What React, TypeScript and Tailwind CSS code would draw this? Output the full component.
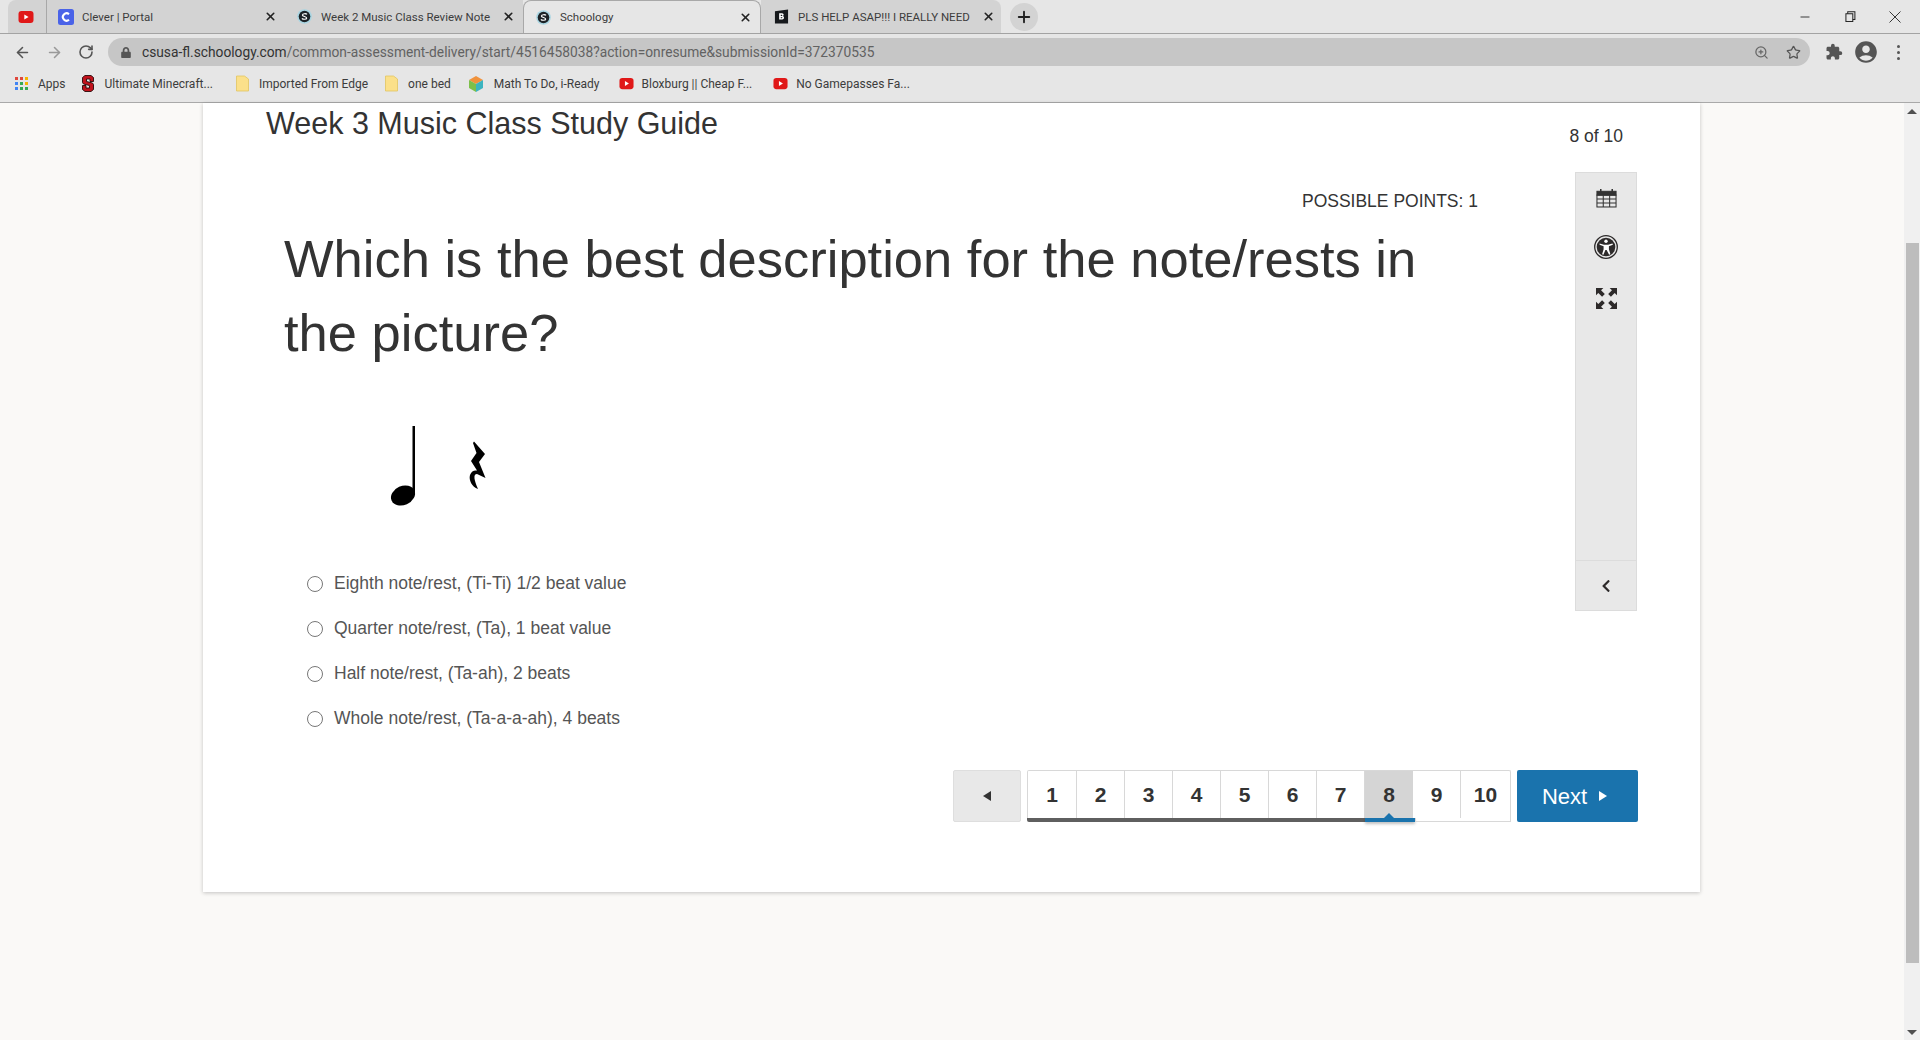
import { ArrowLeft, ArrowRight, RotateCw, ZoomIn, Star, Plus, X, Minus } from "lucide-react";
import { FaChevronLeft, FaLock } from "react-icons/fa";
import { MdAccountCircle, MdExtension } from "react-icons/md";

const chromeFont = "font-['Roboto',sans-serif]";

const YouTubeIcon = ({ className }: { className: string }) => (
  <svg viewBox="0 0 16 16" className={className}>
    <rect x="0.5" y="2" width="15" height="12" rx="3" fill="#e01818" />
    <path d="M6.3 5.4 10.6 8l-4.3 2.6z" fill="#fff" />
  </svg>
);

const SchoologyIcon = () => (
  <svg viewBox="0 0 16 16" className="w-[15px] h-[15px] shrink-0">
    <circle cx="8" cy="8" r="7.8" fill="#a9d5e2" />
    <circle cx="8" cy="8" r="6.2" fill="#1c2226" />
    <path d="M10.6 5.8C10 4.8 6 4.6 5.8 6.4 5.6 8.2 10.4 7.8 10.3 9.7 10.2 11.4 6 11.2 5.3 10" fill="none" stroke="#fff" strokeWidth="1.3" />
  </svg>
);

const CleverIcon = () => (
  <svg viewBox="0 0 16 16" className="w-4 h-4 shrink-0">
    <rect width="16" height="16" rx="2.5" fill="#4a63e8" />
    <path d="M11 5.2A3.7 3.7 0 1 0 11 10.8" fill="none" stroke="#fff" strokeWidth="2" />
  </svg>
);

const BrainlyIcon = () => (
  <svg viewBox="0 0 16 16" className="w-[15px] h-[15px] shrink-0">
    <path d="M1 2.5 15 0.5V15.5H1z" fill="#16191c" />
    <path d="M5.5 4.5h3.2c2 0 2.2 2.6.6 3 2 .3 1.8 3.6-.4 3.6H5.5zM7.2 6v1.5h1c.9 0 .9-1.5 0-1.5zM7.2 8.8v1h1.2c.9 0 .9-1 0-1z" fill="#fff" fillRule="evenodd" />
  </svg>
);

const FolderIcon = () => (
  <svg viewBox="0 0 13 17" className="w-[13px] h-[17px] shrink-0">
    <path d="M.5 1h8l4 3v12H.5z" fill="#fbe08a" stroke="#e2c560" strokeWidth="0.8" />
  </svg>
);

const AppsIcon = () => {
  const dots = ["#e0483c", "#e0483c", "#f4b400", "#4285f4", "#34a853", "#f4b400", "#4285f4", "#34a853", "#34a853"];
  return (
    <div className="grid grid-cols-3 gap-[2px] w-[13px] shrink-0">
      {dots.map((c, i) => (
        <span key={i} className="w-[3px] h-[3px]" style={{ background: c }} />
      ))}
    </div>
  );
};

const tabs = [
  { id: "clever", title: "Clever | Portal", icon: <CleverIcon />, active: false, gap: "gap-[8px]", pad: "pl-[11px]" },
  { id: "notes", title: "Week 2 Music Class Review Note", icon: <SchoologyIcon />, active: false, gap: "gap-[9px]", pad: "pl-[12px]" },
  { id: "school", title: "Schoology", icon: <SchoologyIcon />, active: true, gap: "gap-[9px]", pad: "pl-[12px]" },
  { id: "brainly", title: "PLS HELP ASAP!!! I REALLY NEED", icon: <BrainlyIcon />, active: false, gap: "gap-[9px]", pad: "pl-[13px]" },
];

const Tab = ({ title, icon, active, gap, pad, last }: { title: string; icon: React.ReactNode; active: boolean; gap: string; pad: string; last: boolean }) => (
  <div
    className={`w-[238px] h-full flex items-center ${last ? "pr-[6px]" : "pr-[8px]"} ${pad} ${gap} ${
      active ? "bg-[#e6e6e6] rounded-t-[8px] border border-b-0 border-[#a8a8a8] -mb-px h-[34px] z-10" : `bg-[#d3d3d3] ${last ? "rounded-tr-[8px] w-[240px]" : ""}`
    }`}
  >
    {icon}
    <span className="flex-1 min-w-0 pt-[2px] text-[11.5px] text-[#3c3c3c] whitespace-nowrap overflow-hidden">{title}</span>
    <X className="w-[13px] h-[13px] text-[#222] shrink-0" strokeWidth={3} />
  </div>
);

const Bookmark = ({ icon, label, className }: { icon: React.ReactNode; label: string; className: string }) => (
  <div className={`flex items-center ${className}`}>
    {icon}
    <span className="text-[12px] text-[#3c3c3c] whitespace-nowrap">{label}</span>
  </div>
);

const BrowserChrome = () => (
  <div className={`shrink-0 ${chromeFont}`}>
    <div className="h-[34px] bg-[#e6e6e6] border-b border-[#a3a3a3] flex items-stretch pl-[8px] pr-[19px]">
      <div className="w-[39px] bg-[#d3d3d3] rounded-tl-[8px] flex items-center justify-center border-r border-[#a8a8a8] pr-[2px]">
        <YouTubeIcon className="w-4 h-4" />
      </div>
      {tabs.map((t, i) => (
        <Tab key={t.id} title={t.title} icon={t.icon} active={t.active} gap={t.gap} pad={t.pad} last={i === 3} />
      ))}
      <div className="ml-[9px] my-auto w-[28px] h-[28px] rounded-full bg-[#d3d3d3] flex items-center justify-center">
        <Plus className="w-[18px] h-[18px] text-[#222]" strokeWidth={2.5} />
      </div>
      <div className="ml-auto flex items-center gap-[33px] text-[#222]">
        <Minus className="w-[14px] h-[14px]" strokeWidth={1.5} />
        <svg viewBox="0 0 12 12" className="w-[11px] h-[11px]" fill="none" stroke="currentColor" strokeWidth="1.1">
          <rect x="1" y="3" width="7.5" height="8.5" />
          <path d="M3 3V.8h7.8v8.4H8.5" />
        </svg>
        <svg viewBox="0 0 12 12" className="w-[12px] h-[12px]" fill="none" stroke="currentColor" strokeWidth="0.9">
          <path d="M.5.5l11 11M11.5.5l-11 11" />
        </svg>
      </div>
    </div>
    <div className="h-[36px] bg-[#e6e6e6] flex items-center pl-[14px]">
      <ArrowLeft className="w-[17px] h-[17px] text-[#555]" strokeWidth={2.2} />
      <ArrowRight className="w-[17px] h-[17px] text-[#999] ml-[15px]" strokeWidth={2.2} />
      <RotateCw className="w-[16px] h-[16px] text-[#555] ml-[15px]" strokeWidth={2.4} />
      <div className="ml-[14px] w-[1702px] h-[28px] bg-[#c6c6c6] rounded-full flex items-center pl-[13px] pr-[9px] shrink-0">
        <FaLock className="w-[10px] h-[11px] text-[#555]" />
        <span className="ml-[11px] text-[13.75px] text-[#333] whitespace-nowrap">
          csusa-fl.schoology.com
          <span className="text-[#626262]">/common-assessment-delivery/start/4516458038?action=onresume&amp;submissionId=372370535</span>
        </span>
        <ZoomIn className="ml-auto w-[15px] h-[15px] text-[#666]" />
        <Star className="ml-[17px] w-[15px] h-[15px] text-[#555]" strokeWidth={2} />
      </div>
      <MdExtension className="ml-[15px] w-[18px] h-[18px] text-[#555] shrink-0" />
      <MdAccountCircle className="ml-[10px] w-[26px] h-[26px] text-[#555] shrink-0" />
      <div className="ml-[18px] flex flex-col gap-[3px] shrink-0">
        <span className="w-[3px] h-[3px] rounded-full bg-[#555]" />
        <span className="w-[3px] h-[3px] rounded-full bg-[#555]" />
        <span className="w-[3px] h-[3px] rounded-full bg-[#555]" />
      </div>
    </div>
    <div className="h-[33px] bg-[#e6e6e6] border-b border-[#a9a9a9] flex items-center pl-[15px] pb-[5px]">
      <Bookmark icon={<AppsIcon />} label="Apps" className="gap-[10px]" />
      <Bookmark
        icon={
          <svg viewBox="0 0 12 17" className="w-[12px] h-[17px] shrink-0">
            <path
              d="M3 .5h6l2.500 2v4H8V4H4.500v2.500L10.500 8l1 1.500v5L9 16.500H3l-2.500-2v-4H4V13h3.500v-2.500L1.500 9 .5 7.500v-5z"
              fill="#c1121c"
              stroke="#2a0a0a"
              strokeWidth="0.9"
            />
          </svg>
        }
        label="Ultimate Minecraft..."
        className="ml-[16px] gap-[11px]"
      />
      <Bookmark icon={<FolderIcon />} label="Imported From Edge" className="ml-[23px] gap-[10px]" />
      <Bookmark icon={<FolderIcon />} label="one bed" className="ml-[17px] gap-[10px]" />
      <Bookmark
        icon={
          <svg viewBox="0 0 16 16" className="w-4 h-4 shrink-0">
            <path d="M8 0l7 4-7 4-7-4z" fill="#f0923c" />
            <path d="M1 4l7 4v8l-7-4z" fill="#7cc04a" />
            <path d="M15 4l-7 4v8l7-4z" fill="#3cb4c0" />
          </svg>
        }
        label="Math To Do, i-Ready"
        className="ml-[17px] gap-[10px]"
      />
      <Bookmark icon={<YouTubeIcon className="w-[15px] h-[15px] shrink-0" />} label="Bloxburg || Cheap F..." className="ml-[19px] gap-[8px]" />
      <Bookmark icon={<YouTubeIcon className="w-[15px] h-[15px] shrink-0" />} label="No Gamepasses Fa..." className="ml-[21px] gap-[8px]" />
    </div>
  </div>
);

const AccessIcon = () => (
  <svg viewBox="0 0 24 24" className="w-[24px] h-[24px]">
    <circle cx="12" cy="12" r="11.300" fill="none" stroke="#2d2a2a" strokeWidth="1.300" />
    <circle cx="12" cy="12" r="9.300" fill="#2d2a2a" />
    <circle cx="12" cy="6.300" r="1.700" fill="#fff" />
    <path d="M5.500 8.600 10 9.800h4l4.500-1.200.4 1.200-4 1.500v3l1.500 5-1.300.4L12.600 15h-1.200l-2 4.700-1.300-.4 1.500-5v-3l-4-1.500z" fill="#fff" />
  </svg>
);

const CalendarIcon = () => (
  <svg viewBox="0 0 22 20" className="w-[21px] h-[20px]" fill="none" stroke="#333" strokeWidth="1.100">
    <rect x="1" y="3" width="20" height="4" fill="#333" />
    <path d="M5 .5V4M17 .5V4" strokeWidth="1.600" />
    <rect x="1" y="7" width="20" height="12.400" />
    <path d="M1 11h20M1 15.200h20M7.600 7v12.400M14.300 7v12.400" />
  </svg>
);

const ExpandIcon = () => (
  <svg viewBox="0 0 20 20" className="mt-[29px] w-[21px] h-[21px]" fill="#2d2a2a">
    <path d="M0 0h7L4.800 2.200 8.400 5.800 5.800 8.400 2.200 4.800 0 7z" />
    <path d="M20 0h-7l2.200 2.200-3.600 3.600 2.600 2.600 3.600-3.600L20 7z" />
    <path d="M0 20h7l-2.200-2.200 3.600-3.600-2.600-2.600-3.600 3.600L0 13z" />
    <path d="M20 20h-7l2.200-2.200-3.600-3.600 2.600-2.600 3.600 3.600L20 13z" />
  </svg>
);

const Toolbar = () => (
  <div className="w-[62px] h-[439px] shrink-0 bg-[#e8e8e8] border border-[#dcdcdc] flex flex-col items-center">
    <div className="mt-[15px]">
      <CalendarIcon />
    </div>
    <div className="mt-[27px]">
      <AccessIcon />
    </div>
    <ExpandIcon />
    <div className="mt-auto w-full h-[50px] border-t border-[#dcdcdc] flex items-center justify-center">
      <FaChevronLeft className="w-[14px] h-[14px] text-[#2d2a2a]" />
    </div>
  </div>
);

const NoteImage = () => (
  <svg viewBox="0 0 160 110" className="w-[160px] h-[110px] mt-[41px] ml-[76px] block">
    <rect x="52.500" y="16" width="2.500" height="68" fill="#000" />
    <ellipse cx="43" cy="85.500" rx="12.500" ry="9.500" fill="#000" transform="rotate(-24 43 85.500)" />
    <path d="M114 31.500 125 44 119 52 125.500 68 117 64C113 64 114 70 118 79 112 77 108.500 70 110 65 111.500 61 114 60 117 60.500L111 51 116.500 43 113 33z" fill="#000" />
  </svg>
);

const options = [
  "Eighth note/rest, (Ti-Ti) 1/2 beat value",
  "Quarter note/rest, (Ta), 1 beat value",
  "Half note/rest, (Ta-ah), 2 beats",
  "Whole note/rest, (Ta-a-a-ah), 4 beats",
];

const Options = () => (
  <div className="mt-[41px] ml-[23px]">
    {options.map((o) => (
      <div key={o} className="h-[45px] flex items-center gap-[11px]">
        <span className="w-[16px] h-[16px] rounded-full bg-white border border-[#777] shrink-0" />
        <span className="text-[17.5px] text-[#555]">{o}</span>
      </div>
    ))}
  </div>
);

const Pager = () => {
  const nums = [1, 2, 3, 4, 5, 6, 7, 8, 9, 10];
  const current = 8;
  return (
    <div className="flex justify-end gap-[6px] h-[52px] pr-[62px] mt-[29px]">
      <div className="w-[68px] bg-[#e8e8e8] border border-[#dedede] rounded-[2px] flex items-center justify-center">
        <svg viewBox="0 0 8 10" className="w-[8px] h-[10px]">
          <path d="M8 0v10L0 5z" fill="#333" />
        </svg>
      </div>
      <div className="flex flex-col w-[484px]">
        <div className="flex-1 flex border-t border-x border-[#d8d8d8] rounded-t-[2px]">
          {nums.map((n) => {
            const on = n === current;
            return (
              <div
                key={n}
                className={`relative flex items-center justify-center text-[21px] font-bold text-[#333] ${
                  n === 1 || n === 10 ? "w-[49px]" : "w-[48px]"
                } ${n !== 10 && n !== current ? "border-r border-[#d8d8d8]" : ""} ${on ? "bg-[#d5d5d5]" : ""}`}
              >
                {n}
                {on && (
                  <span className="absolute left-1/2 -translate-x-1/2 bottom-0 w-0 h-0 border-x-[5px] border-x-transparent border-b-[5px] border-b-[#1a73ad]" />
                )}
              </div>
            );
          })}
        </div>
        <div className="h-[4px] flex">
          <div className="w-[338px] bg-[#5f5f5f] rounded-bl-[2px]" />
          <div className="w-[50px] bg-[#1a73ad] shadow-[0_2px_3px_rgba(0,0,0,0.25)]" />
          <div className="flex-1 border-b border-x border-[#d8d8d8]" />
        </div>
      </div>
      <div className="w-[121px] bg-[#1a73ad] rounded-[2px] flex items-center justify-center gap-[12px] pr-[6px] text-[22px] text-white">
        Next
        <svg viewBox="0 0 8 10" className="w-[8px] h-[10px]">
          <path d="M0 0v10L8 5z" fill="#fff" />
        </svg>
      </div>
    </div>
  );
};

const App = () => {
  return (
    <div className="w-[1920px] h-[1040px] flex flex-col overflow-hidden bg-[#faf9f7] font-['Liberation_Sans',sans-serif]">
      <BrowserChrome />
      <div className="flex-1 flex min-h-0">
        <div className="flex-1 min-w-0 pl-[203px] pr-[204px]">
          <div className="h-[789px] bg-white shadow-[0_1px_4px_rgba(0,0,0,0.22)]">
            <div className="flex justify-between h-[69px] pl-[63px] pr-[77px]">
              <h1 className="mt-[2px] text-[30.500px] leading-[36px] text-[#333] font-normal">Week 3 Music Class Study Guide</h1>
              <span className="mt-[21px] text-[17.500px] leading-[24px] text-[#333]">8 of 10</span>
            </div>
            <div className="flex items-start">
              <div className="flex-1 min-w-0 pl-[81px]">
                <div className="pt-[17px] pr-[97px] text-right text-[17.500px] leading-[24px] text-[#333]">POSSIBLE POINTS: 1</div>
                <h2 className="mt-[9px] w-[1170px] text-[52.500px] leading-[73.500px] text-[#333] font-normal">
                  Which is the best description for the note/rests in the picture?
                </h2>
                <NoteImage />
                <Options />
              </div>
              <div className="mr-[63px]">
                <Toolbar />
              </div>
            </div>
            <Pager />
          </div>
        </div>
        <div className="w-[16px] shrink-0 bg-[#f0f0f0] flex flex-col items-center">
          <div className="h-[16px] flex items-center">
            <span className="w-0 h-0 border-x-[5px] border-x-transparent border-b-[5px] border-b-[#505050]" />
          </div>
          <div className="mt-[124px] w-[13px] h-[720px] bg-[#bdbdbd]" />
          <div className="mt-auto h-[16px] flex items-center">
            <span className="w-0 h-0 border-x-[5px] border-x-transparent border-t-[5px] border-t-[#505050]" />
          </div>
        </div>
      </div>
    </div>
  );
};

export default App;
